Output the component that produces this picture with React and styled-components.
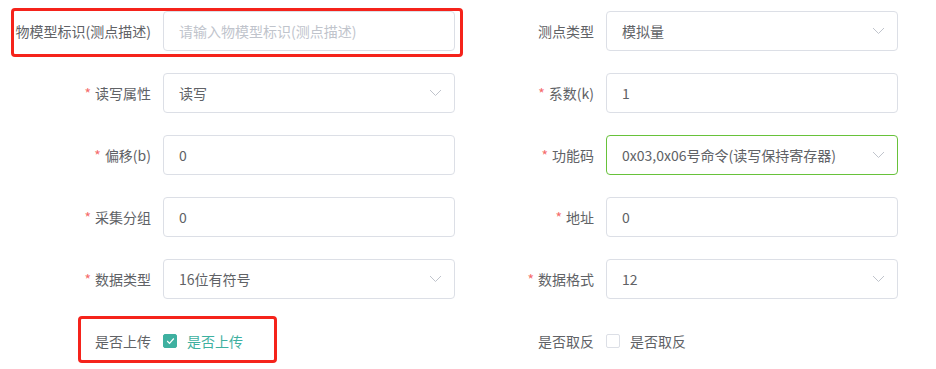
import styled, { createGlobalStyle } from "styled-components";

const GlobalStyle = createGlobalStyle`
  body {
    margin: 0;
    background: #fff;
    font-family: "Noto Sans CJK SC", "Noto Sans", sans-serif;
  }
`;

const Page = styled.div`
  width: 936px;
  height: 369px;
  padding: 11px 0 0 13px;
  box-sizing: border-box;
  background: #fff;
`;

const Form = styled.div`
  display: grid;
  grid-template-columns: 443px 443px;
  row-gap: 22px;
`;

const FormItem = styled.div`
  position: relative;
  display: flex;
  align-items: center;
  height: 40px;

  ${({ $mark }) =>
    $mark &&
    `
    &::after {
      content: "";
      position: absolute;
      inset: ${$mark};
      border: 3px solid #f5231b;
      border-radius: 4px;
      pointer-events: none;
    }
  `}
`;

const Label = styled.label`
  width: 150px;
  flex: none;
  box-sizing: border-box;
  padding-right: 12px;
  text-align: right;
  font-size: 14px;
  line-height: 40px;
  color: #606266;
  white-space: nowrap;
`;

const Star = styled.span`
  color: #f56c6c;
  margin-right: 4px;
`;

const Input = styled.div`
  width: 292px;
  height: 40px;
  box-sizing: border-box;
  display: flex;
  align-items: center;
  justify-content: space-between;
  padding: 0 12px 0 15px;
  border: 1px solid ${({ $focus }) => ($focus ? "#67c23a" : "#dcdfe6")};
  border-radius: 4px;
  font-size: 14px;
  color: ${({ $placeholder }) => ($placeholder ? "#c0c4cc" : "#606266")};
  background: #fff;
`;

const Chevron = () => (
  <svg width="13" height="8" viewBox="0 0 13 8" fill="none">
    <path d="M1 1l5.5 5.5L12 1" stroke="#c0c4cc" strokeWidth="1" />
  </svg>
);

const CheckWrap = styled.div`
  display: flex;
  align-items: center;
  font-size: 14px;
  color: ${({ $checked }) => ($checked ? "#3eb0a0" : "#606266")};
`;

const Box = styled.span`
  width: 14px;
  height: 14px;
  box-sizing: border-box;
  border-radius: 2px;
  margin-right: 10px;
  display: inline-flex;
  align-items: center;
  justify-content: center;
  border: 1px solid ${({ $checked }) => ($checked ? "#3eb0a0" : "#dcdfe6")};
  background: ${({ $checked }) => ($checked ? "#3eb0a0" : "#fff")};
`;

const Field = ({ label, required, value, placeholder, select, focus, mark }) => (
  <FormItem $mark={mark}>
    <Label>
      {required && <Star>*</Star>}
      {label}
    </Label>
    <Input $placeholder={!value} $focus={focus}>
      <span>{value || placeholder}</span>
      {select && <Chevron />}
    </Input>
  </FormItem>
);

const Check = ({ label, checked, mark }) => (
  <FormItem $mark={mark}>
    <Label>{label}</Label>
    <CheckWrap $checked={checked}>
      <Box $checked={checked}>
        {checked && (
          <svg width="9" height="8" viewBox="0 0 9 8" fill="none">
            <path d="M1.2 4l2.3 2.3L7.8 1.5" stroke="#fff" strokeWidth="1.2" />
          </svg>
        )}
      </Box>
      {label}
    </CheckWrap>
  </FormItem>
);

export default function App() {
  return (
    <>
      <GlobalStyle />
      <Page>
        <Form>
          <Field
            label="物模型标识(测点描述)"
            placeholder="请输入物模型标识(测点描述)"
            mark="-3px -7px -6px -2px"
          />
          <Field label="测点类型" value="模拟量" select />
          <Field label="读写属性" required value="读写" select />
          <Field label="系数(k)" required value="1" />
          <Field label="偏移(b)" required value="0" />
          <Field
            label="功能码"
            required
            value="0x03,0x06号命令(读写保持寄存器)"
            select
            focus
          />
          <Field label="采集分组" required value="0" />
          <Field label="地址" required value="0" />
          <Field label="数据类型" required value="16位有符号" select />
          <Field label="数据格式" required value="12" select />
          <Check label="是否上传" checked mark="-5px 179px -2px 65px" />
          <Check label="是否取反" />
        </Form>
      </Page>
    </>
  );
}
